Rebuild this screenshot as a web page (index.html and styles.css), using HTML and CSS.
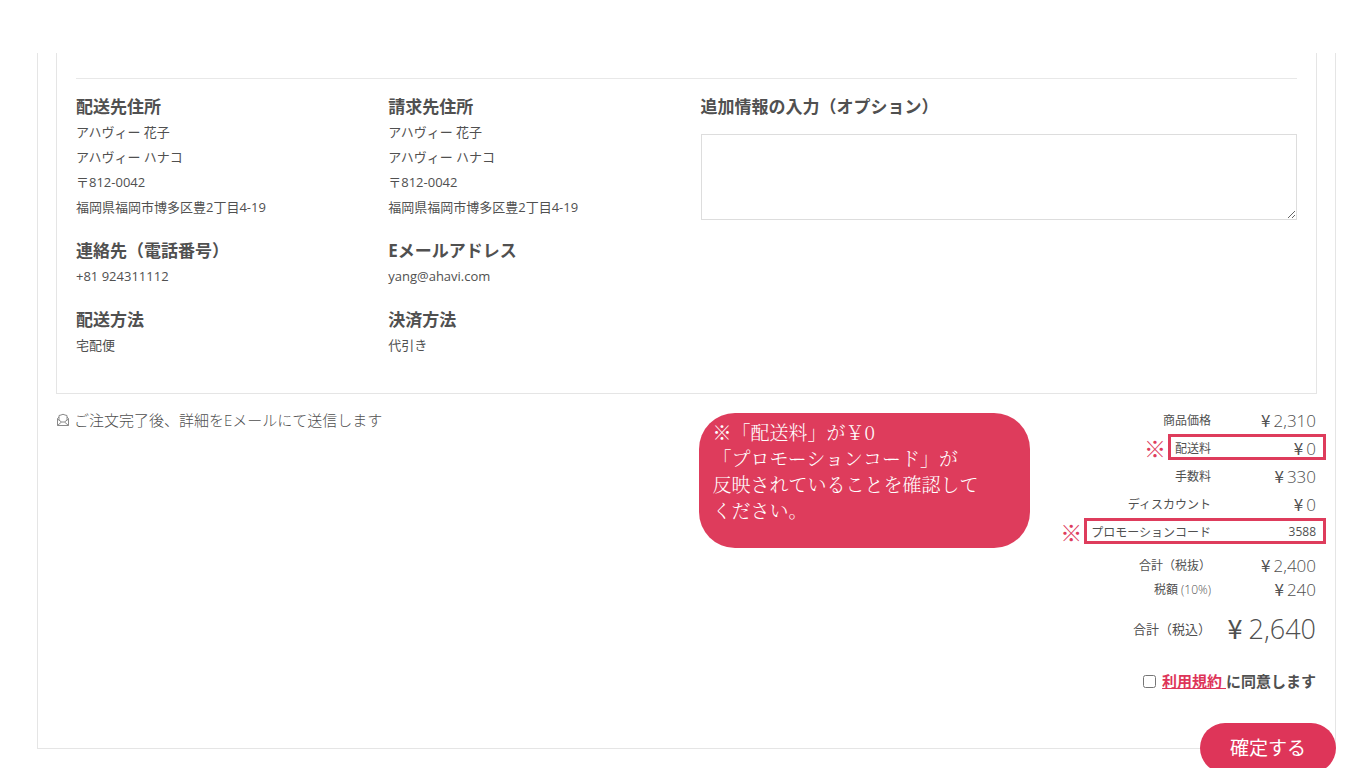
FILE: index.html
```html
<!DOCTYPE html>
<html lang="ja">
<head>
<meta charset="utf-8">
<meta name="viewport" content="width=device-width, initial-scale=1">
<title>ご注文内容の確認</title>
<link rel="stylesheet" href="styles.css">
</head>
<body>
<main class="checkout">
  <section class="review">
    <div class="details">
      <div class="column">
        <section class="block">
          <h2>配送先住所</h2>
          <p>アハヴィー 花子</p>
          <p>アハヴィー ハナコ</p>
          <p>〒812-0042</p>
          <p>福岡県福岡市博多区豊2丁目4-19</p>
        </section>
        <section class="block">
          <h2>連絡先（電話番号）</h2>
          <p>+81 924311112</p>
        </section>
        <section class="block">
          <h2>配送方法</h2>
          <p>宅配便</p>
        </section>
      </div>
      <div class="column">
        <section class="block">
          <h2>請求先住所</h2>
          <p>アハヴィー 花子</p>
          <p>アハヴィー ハナコ</p>
          <p>〒812-0042</p>
          <p>福岡県福岡市博多区豊2丁目4-19</p>
        </section>
        <section class="block">
          <h2>Eメールアドレス</h2>
          <p>yang@ahavi.com</p>
        </section>
        <section class="block">
          <h2>決済方法</h2>
          <p>代引き</p>
        </section>
      </div>
      <div class="extra">
        <label for="extra-info">追加情報の入力（オプション）</label>
        <textarea id="extra-info"></textarea>
      </div>
    </div>
  </section>

  <div class="lower">
    <p class="mail-note">
      <svg class="mail-icon" viewBox="0 0 14 14" aria-hidden="true">
        <path d="M1.500 5.500V12.500H12.500V5.500M3 7V2.500L5 2Q7 .5 9 2L11 2.500V7M1.500 5.500L3 4M12.500 5.500L11 4M1.500 6L5.500 9H8.500L12.500 6M1.500 12.500L5.500 9M12.500 12.500L8.500 9"/>
      </svg>
      ご注文完了後、詳細をEメールにて送信します
    </p>
    <aside class="callout">※「配送料」が￥0<br>「プロモーションコード」が<br>反映されていることを確認して<br>ください。</aside>
    <div class="summary">
      <dl class="totals">
        <div class="row"><dt>商品価格</dt><dd><span class="yen">¥</span>2,310</dd></div>
        <div class="row marked"><dt>配送料</dt><dd><span class="yen">¥</span>0</dd></div>
        <div class="row"><dt>手数料</dt><dd><span class="yen">¥</span>330</dd></div>
        <div class="row"><dt>ディスカウント</dt><dd><span class="yen">¥</span>0</dd></div>
        <div class="row marked"><dt>プロモーションコード</dt><dd class="code">3588</dd></div>
        <div class="row subtotal"><dt>合計（税抜）</dt><dd><span class="yen">¥</span>2,400</dd></div>
        <div class="row tax"><dt>税額 <span class="rate">(10%)</span></dt><dd><span class="yen">¥</span>240</dd></div>
        <div class="row grand"><dt>合計（税込）</dt><dd><span class="yen">¥</span>2,640</dd></div>
      </dl>
      <div class="terms">
        <input type="checkbox" id="agree">
        <label for="agree"><a href="#terms">利用規約 </a>に同意します</label>
      </div>
    </div>
  </div>
  <button class="confirm" type="submit">確定する</button>
</main>
</body>
</html>
```
FILE: styles.css
```css
* {
  box-sizing: border-box;
}

html {
  overflow: hidden;
}

body {
  min-height: 100vh;
  margin: 0;
  padding-top: 53px;
  background: #fff;
  color: #505050;
  font-family: "Open Sans", "Noto Sans CJK JP", sans-serif;
  font-size: 13px;
}

h2, p, dl, dt, dd {
  margin: 0;
}

.checkout {
  position: relative;
  margin: 0 30px 0 37px;
  padding: 0 18px 55px;
  border: solid #e5e5e5;
  border-width: 0 1px 1px;
}

.review {
  padding: 25px 19px 35px;
  border: solid #e5e5e5;
  border-width: 0 1px 1px;
}

.details {
  display: grid;
  grid-template-columns: 1fr 1fr 2fr;
  column-gap: 14px;
  padding-top: 14px;
  border-top: 1px solid #e8e8e8;
}

.column {
  display: flex;
  flex-direction: column;
  gap: 17px;
}

.block h2,
.extra label {
  font-size: 17px;
  font-weight: 700;
  line-height: 27px;
}

.block p {
  line-height: 25px;
}

.extra {
  display: flex;
  flex-direction: column;
  gap: 14px;
}

.extra textarea {
  width: 100%;
  height: 86px;
  padding: 8px;
  border: 1px solid #ddd;
  color: inherit;
  font: inherit;
  resize: vertical;
}

.lower {
  display: flex;
  align-items: flex-start;
  padding: 13px 1px 0 0;
}

.mail-note {
  display: flex;
  flex: 0 0 51%;
  align-items: center;
  gap: 4px;
  font-size: 15px;
  font-weight: 300;
  line-height: 26px;
}

.mail-icon {
  width: 14px;
  height: 14px;
  fill: none;
  stroke: #8a8a8a;
}

.callout {
  flex: 0 0 331px;
  margin-top: 6px;
  padding: 6px 14px 25px;
  border-radius: 36px;
  background: #de3c5c;
  color: #fff;
  font-family: "Noto Serif CJK JP", "Noto Sans CJK JP", serif;
  font-size: 19px;
  font-weight: 300;
  line-height: 26px;
}

.summary {
  margin: -2px 0 0 auto;
}

.totals {
  display: flex;
  flex-direction: column;
  align-items: flex-end;
}

.row {
  position: relative;
  display: flex;
  align-items: center;
  height: 28px;
  font-size: 12px;
  white-space: nowrap;
}

.row dt {
  padding-top: 2px;
}

.row dd {
  width: 105px;
  font-size: 17px;
  font-weight: 300;
  text-align: right;
}

.row .code {
  font-size: 12px;
  font-weight: 400;
}

.yen {
  margin-right: 3px;
  font-family: "Noto Sans CJK JP", sans-serif;
  font-weight: 400;
}

.marked {
  height: 26px;
  margin: 1px -10px 1px 0;
  padding: 0 7px 0 4px;
  border: 3px solid #de3c5c;
}

.marked::before {
  position: absolute;
  right: 100%;
  margin-right: 5px;
  color: #de3c5c;
  content: "※";
  font-family: "Noto Sans CJK JP", sans-serif;
  font-size: 22px;
  font-weight: 300;
}

.subtotal {
  height: 24px;
  margin-top: 7px;
}

.tax {
  height: 24px;
}

.rate {
  font-weight: 300;
}

.grand {
  height: 40px;
  margin-top: 7px;
  font-size: 13px;
}

.grand dd {
  font-size: 27px;
}

.grand .yen {
  margin-right: 6px;
}

.terms {
  display: flex;
  align-items: center;
  justify-content: flex-end;
  gap: 6px;
  margin-top: 22px;
  font-size: 15px;
  font-weight: 700;
  line-height: 24px;
}

.terms input {
  width: 13px;
  height: 13px;
  margin: 0;
}

.terms a {
  color: #de3559;
}

.confirm {
  position: absolute;
  right: -1px;
  bottom: 0;
  padding: 0 30px;
  border: 0;
  border-radius: 26px;
  background: #de3559;
  color: #fff;
  font-family: inherit;
  font-size: 19px;
  line-height: 50px;
  transform: translateY(50%);
}
```
